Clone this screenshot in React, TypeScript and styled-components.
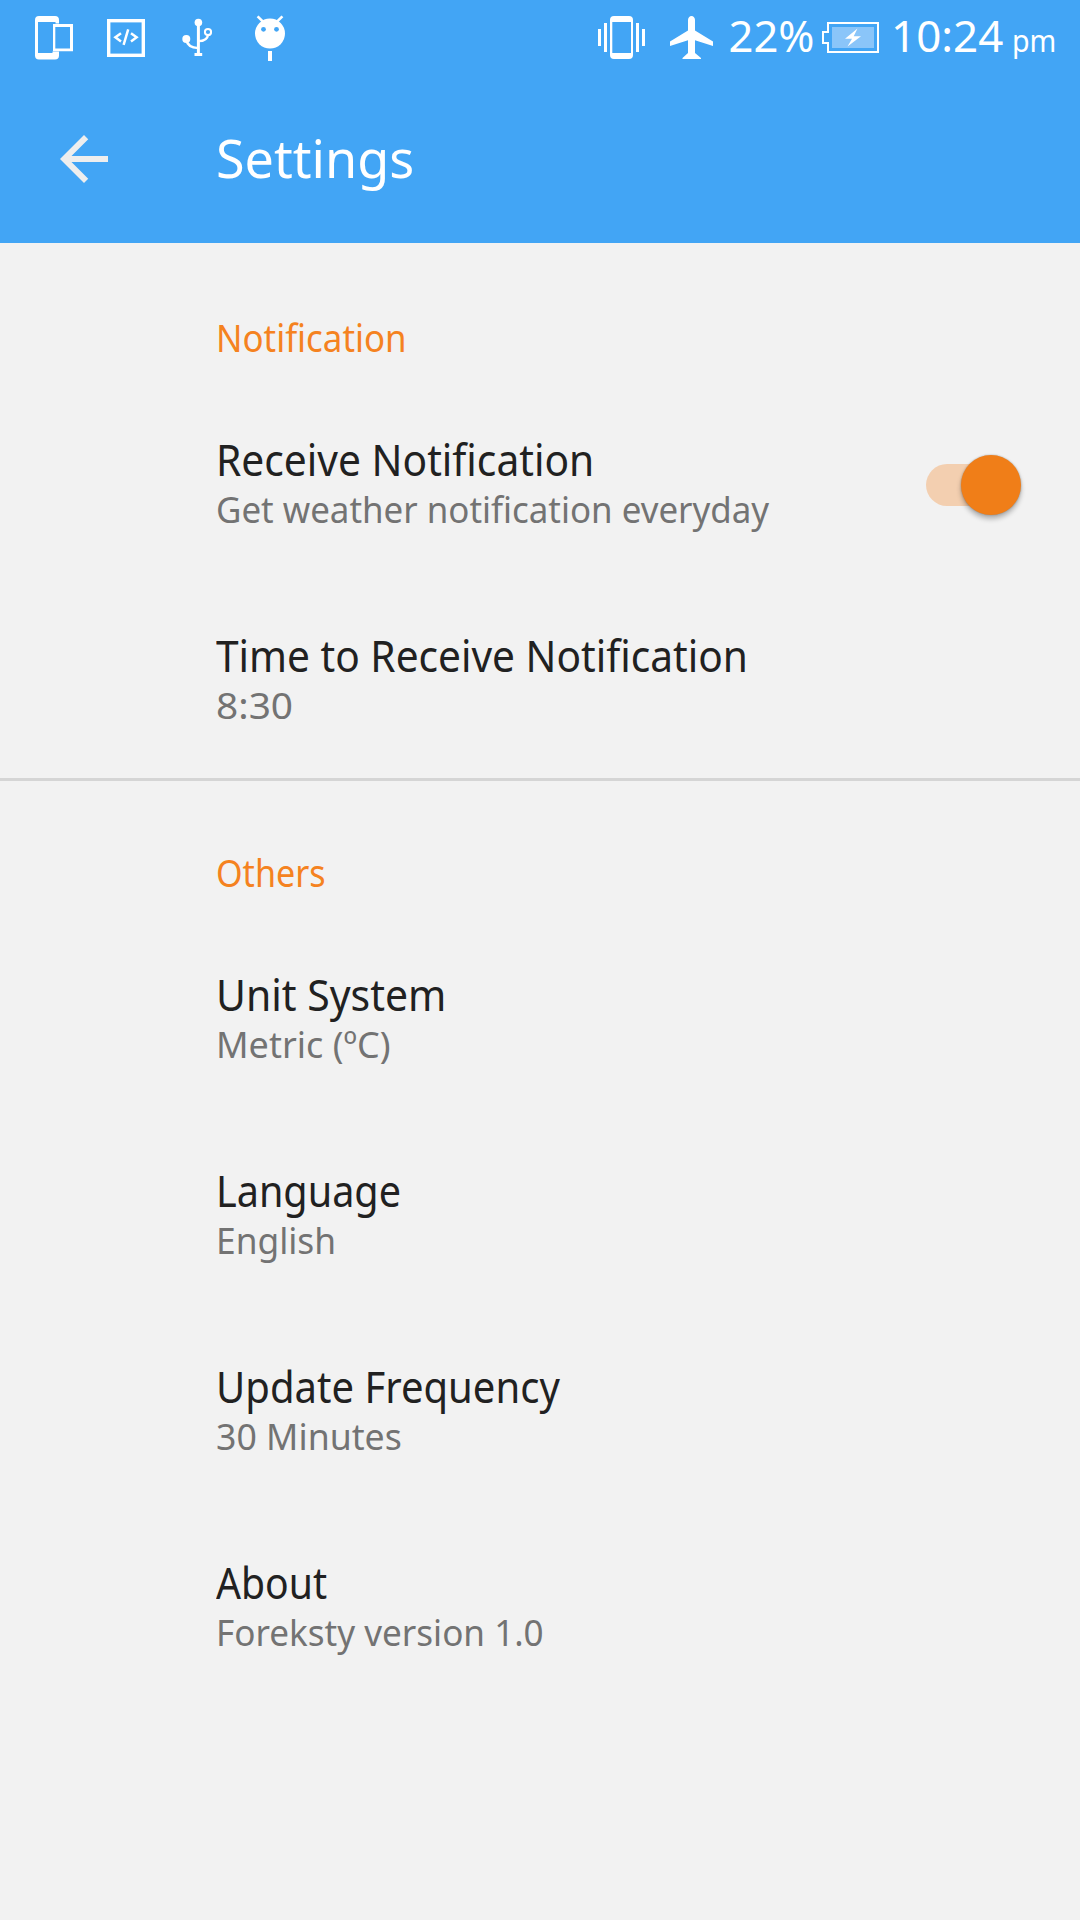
import React, { useState } from "react";
import styled, { createGlobalStyle } from "styled-components";

const GlobalStyle = createGlobalStyle`
  *, *::before, *::after { box-sizing: border-box; }
  body {
    margin: 0;
    background: #f2f2f2;
    font-family: "Noto Sans", "Open Sans", sans-serif;
    font-variant-ligatures: none;
  }
`;

const Screen = styled.div`
  display: flex;
  flex-direction: column;
  width: 1080px;
  height: 1920px;
  overflow: hidden;
  background: #f2f2f2;
`;

const Header = styled.header`
  flex: none;
  height: 243px;
  background: #42a5f5;
  color: #fff;
`;

const StatusBar = styled.div`
  display: flex;
  justify-content: space-between;
  height: 75px;
  padding: 0 25px 0 35px;
`;

const StatusGroup = styled.div`
  display: flex;
`;

const StatusIcon = styled.svg<{ $after?: number }>`
  display: block;
  flex: none;
  height: 75px;
  margin-right: ${(p) => p.$after ?? 0}px;
`;

const Label = styled.span<{ $stretch?: number }>`
  display: block;
  width: max-content;
  white-space: pre;
  transform: scaleX(${(p) => p.$stretch ?? 1});
  transform-origin: left center;
`;

const StatusText = styled(Label)<{ $width: number; $small?: boolean }>`
  width: ${(p) => p.$width}px;
  font-size: ${(p) => (p.$small ? 30 : 43.5)}px;
  line-height: ${(p) => (p.$small ? 82 : 71)}px;
`;

const Toolbar = styled.div`
  display: flex;
  align-items: center;
  height: 168px;
  padding-left: 48px;
`;

const BackButton = styled.button`
  display: block;
  width: 72px;
  height: 72px;
  padding: 0;
  border: 0;
  background: none;
  color: #eeeeee;
`;

const ToolbarTitle = styled.h1`
  margin: 0 0 2px 96px;
  font-size: 53px;
  font-weight: 400;
  line-height: 64px;
`;

const Section = styled.section<{ $divided?: boolean }>`
  display: flex;
  flex-direction: column;
  box-shadow: ${(p) => (p.$divided ? "inset 0 3px 0 #d5d5d5" : "none")};
`;

const SectionTitle = styled.h2`
  height: 143px;
  margin: 0;
  padding: 64px 0 0 216px;
  color: #f58220;
  font-size: 38px;
  font-weight: 400;
  line-height: 60px;
`;

const Row = styled.div`
  display: flex;
  align-items: center;
  justify-content: space-between;
  height: 196px;
  padding: 0 59px 0 216px;
`;

const RowText = styled.div`
  display: flex;
  flex-direction: column;
  padding-bottom: 6px;
`;

const RowTitle = styled(Label)`
  color: #212121;
  font-size: 43px;
  line-height: 56px;
`;

const RowSummary = styled(Label)`
  color: #737373;
  font-size: 37px;
  line-height: 42px;
`;

const SwitchTrack = styled.button<{ $on: boolean }>`
  display: flex;
  align-items: center;
  justify-content: ${(p) => (p.$on ? "flex-end" : "flex-start")};
  width: 95px;
  height: 42px;
  margin-top: 1px;
  padding: 0;
  border: 0;
  border-radius: 21px;
  background: linear-gradient(${(p) => (p.$on ? "#f3cfb0, #f3cfb0" : "#c4c4c4, #c4c4c4")}) left / 85px 100% no-repeat;
`;

const SwitchThumb = styled.span<{ $on: boolean }>`
  flex: none;
  width: 60px;
  height: 60px;
  border-radius: 50%;
  background: ${(p) => (p.$on ? "#f07e18" : "#fafafa")};
  box-shadow: 0 0 2px rgba(0, 0, 0, 0.3), 0 4px 5px rgba(0, 0, 0, 0.27);
`;

interface SettingItem {
  title: string;
  summary: string;
  titleStretch: number;
  summaryStretch: number;
  toggle?: boolean;
}

const notificationItems: SettingItem[] = [
  { title: "Receive Notification", summary: "Get weather notification everyday", titleStretch: 0.947, summaryStretch: 0.943, toggle: true },
  { title: "Time to Receive Notification", summary: "8:30", titleStretch: 0.945, summaryStretch: 1.05 },
];

const otherItems: SettingItem[] = [
  { title: "Unit System", summary: "Metric (ºC)", titleStretch: 0.952, summaryStretch: 0.972 },
  { title: "Language", summary: "English", titleStretch: 0.92, summaryStretch: 0.954 },
  { title: "Update Frequency", summary: "30 Minutes", titleStretch: 0.931, summaryStretch: 0.964 },
  { title: "About", summary: "Foreksty version 1.0", titleStretch: 0.91, summaryStretch: 0.948 },
];

function DevicesIcon() {
  return (
    <StatusIcon width="38" viewBox="35 0 38 75" $after={34}>
      <path fill="#fff" fillRule="evenodd" d="M39 16h16a4 4 0 0 1 4 4v3.5h-3.5V22H38v31h14.5v-1.500H59V55.500a4 4 0 0 1-4 4H39a4 4 0 0 1-4-4V20a4 4 0 0 1 4-4Z" />
      <path fill="#fff" fillRule="evenodd" d="M53 24h20v27.300H53ZM55.300 27v21.500H70V27Z" />
    </StatusIcon>
  );
}

function CodeIcon() {
  return (
    <StatusIcon width="38" viewBox="107 0 38 75" $after={37}>
      <g fill="none" stroke="#fff">
        <rect x="108.700" y="20.700" width="34.600" height="34.600" strokeWidth="3.400" />
        <path strokeWidth="2.500" d="M121 33.200 115.400 37.300 121 41.400M131 33.200 136.600 37.300 131 41.400M128.200 29.300 123.600 44.800" />
      </g>
    </StatusIcon>
  );
}

function UsbIcon() {
  return (
    <StatusIcon width="30" viewBox="182 0 30 75" $after={43}>
      <g fill="none" stroke="#fff" strokeWidth="2.300">
        <path strokeWidth="3" d="M198.400 22v32" />
        <path d="M186.300 39.500C187 45 192 47.800 198.400 48.200M198.400 41.200C204 41 207.500 39.500 208 35" />
        <circle cx="208" cy="32" r="3.100" strokeWidth="2" />
      </g>
      <circle cx="198.400" cy="22.500" r="3.800" fill="#fff" />
      <circle cx="186.300" cy="39" r="4" fill="#fff" />
      <path fill="#fff" d="M194.500 53h7.700v3h-7.700z" />
    </StatusIcon>
  );
}

function DroidIcon() {
  return (
    <StatusIcon width="30" viewBox="255 0 30 75">
      <circle cx="270" cy="33.600" r="15" fill="#fff" />
      <path stroke="#fff" strokeWidth="2.600" d="M257.600 16.300 263 21.700M282.400 16.300 277 21.700" />
      <circle cx="263.500" cy="29.300" r="2.400" fill="#42a5f5" />
      <circle cx="276.500" cy="29.300" r="2.400" fill="#42a5f5" />
      <path fill="#fff" d="M268 51h4v10h-4z" />
    </StatusIcon>
  );
}

function VibrateIcon() {
  return (
    <StatusIcon width="47" viewBox="598 0 47 75" $after={25}>
      <g fill="#fff">
        <path fillRule="evenodd" d="M614 16h15a4 4 0 0 1 4 4v35a4 4 0 0 1-4 4h-15a4 4 0 0 1-4-4V20a4 4 0 0 1 4-4ZM612.300 22v31h18.700V22Z" />
        <path d="M598 29h3v17h-3zM604 23h3v29h-3zM636 23h3v29h-3zM642 29h3v17h-3z" />
      </g>
    </StatusIcon>
  );
}

function AirplaneIcon() {
  return (
    <StatusIcon width="43" viewBox="670 0 43 75" $after={15.5}>
      <path fill="#fff" d="M691.500 16c2 0 3.500 1.800 3.500 4v10.500l18 11V46l-18-5.800V53l6 5v1h-18.500v-1l5.500-5V40.200L670 46v-4.500l18-11V20c0-2.200 1.500-4 3.500-4Z" />
    </StatusIcon>
  );
}

function BatteryIcon() {
  return (
    <StatusIcon width="57" viewBox="822 0 57 75" $after={12}>
      <path fill="none" stroke="#fff" strokeWidth="2" d="M828 23h50v29h-50v-9h-5V32h5Z" />
      <path fill="#8ac5f9" d="M832 27h42v21h-42z" />
      <path fill="#fff" d="M857.500 28.500 845 38.800h7l-4.500 7.700L861 36.300h-7.300Z" />
    </StatusIcon>
  );
}

function SettingRow({ item }: { item: SettingItem }) {
  const [on, setOn] = useState(true);
  return (
    <Row>
      <RowText>
        <RowTitle $stretch={item.titleStretch}>{item.title}</RowTitle>
        <RowSummary $stretch={item.summaryStretch}>{item.summary}</RowSummary>
      </RowText>
      {item.toggle && (
        <SwitchTrack role="switch" aria-checked={on} $on={on} onClick={() => setOn(!on)}>
          <SwitchThumb $on={on} />
        </SwitchTrack>
      )}
    </Row>
  );
}

export default function App() {
  return (
    <Screen>
      <GlobalStyle />
      <Header>
        <StatusBar>
          <StatusGroup>
            <DevicesIcon />
            <CodeIcon />
            <UsbIcon />
            <DroidIcon />
          </StatusGroup>
          <StatusGroup>
            <VibrateIcon />
            <AirplaneIcon />
            <StatusText $width={93.5}>22%</StatusText>
            <BatteryIcon />
            <StatusText $width={121} $stretch={1.01}>10:24</StatusText>
            <StatusText $width={43} $small $stretch={0.955}>pm</StatusText>
          </StatusGroup>
        </StatusBar>
        <Toolbar>
          <BackButton aria-label="Back">
            <svg width="72" height="72" viewBox="0 0 24 24" fill="currentColor">
              <path d="M20 11H7.830l5.590-5.590L12 4l-8 8 8 8 1.410-1.410L7.830 13H20v-2z" />
            </svg>
          </BackButton>
          <ToolbarTitle>
            <Label $stretch={0.983}>Settings</Label>
          </ToolbarTitle>
        </Toolbar>
      </Header>
      <Section>
        <SectionTitle>
          <Label $stretch={0.917}>Notification</Label>
        </SectionTitle>
        {notificationItems.map((item) => (
          <SettingRow key={item.title} item={item} />
        ))}
      </Section>
      <Section $divided>
        <SectionTitle>
          <Label $stretch={0.897}>Others</Label>
        </SectionTitle>
        {otherItems.map((item) => (
          <SettingRow key={item.title} item={item} />
        ))}
      </Section>
    </Screen>
  );
}
